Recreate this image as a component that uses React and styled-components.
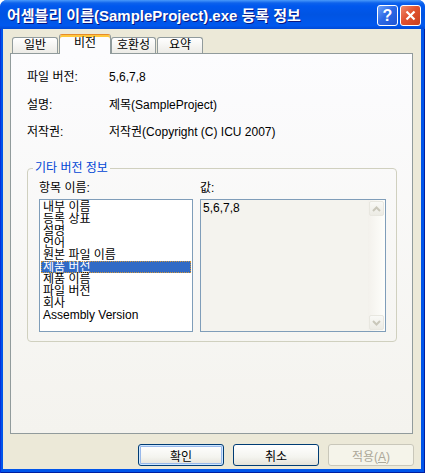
import React from "react";
import styled, { createGlobalStyle } from "styled-components";

const GlobalStyle = createGlobalStyle`
  html, body {
    margin: 0;
    padding: 0;
    background: #ffffff;
  }
  body {
    font-family: "Liberation Sans", "Noto Sans CJK KR", sans-serif;
    font-size: 12px;
    color: #000;
  }
`;

const Window = styled.div`
  width: 425px;
  height: 473px;
  display: flex;
  flex-direction: column;
  border-radius: 7px 7px 0 0;
  overflow: hidden;
  background: #0055ea;
`;

const TitleBar = styled.div`
  height: 29px;
  flex-shrink: 0;
  display: flex;
  align-items: center;
  justify-content: space-between;
  padding: 0 4px 0 7px;
  background: linear-gradient(
    to bottom,
    #4a9afa 0px,
    #0d62ec 3px,
    #0058ee 6px,
    #0054e3 50%,
    #0058ee 88%,
    #0049d6 100%
  );
`;

const Title = styled.span`
  color: #ffffff;
  font-size: 15px;
  font-weight: bold;
  text-shadow: 1px 1px 0 #0a1883;
  white-space: nowrap;
`;

const TitleButtons = styled.div`
  display: flex;
  gap: 2px;
  margin-top: 2px;
`;

const CaptionButton = styled.div`
  width: 21px;
  height: 21px;
  box-sizing: border-box;
  border: 1px solid #ffffff;
  border-radius: 3px;
  display: flex;
  align-items: center;
  justify-content: center;
  color: #ffffff;
  font-size: 16px;
  font-weight: bold;
  background: ${(p) =>
    p.$close
      ? "linear-gradient(135deg, #f08a6c 0%, #e0522f 45%, #c9401e 100%)"
      : "linear-gradient(135deg, #6ea2fa 0%, #2d6ae6 45%, #1f55d4 100%)"};
`;

const Frame = styled.div`
  flex: 1;
  display: flex;
  padding: 0 4px 4px 3px;
  background: #0055ea;
  box-shadow: inset 1px 0 #0831d9, inset -1px 0 #001ea0, inset 0 -1px #001ea0;
`;

const Body = styled.div`
  flex: 1;
  display: flex;
  flex-direction: column;
  background: #ece9d8;
  padding: 6px 8px 3px 7px;
`;

const TabRow = styled.div`
  height: 18px;
  display: flex;
  align-items: flex-end;
  padding-left: 2px;
  position: relative;
  z-index: 1;
`;

const Tab = styled.div`
  box-sizing: border-box;
  width: ${(p) => p.$width}px;
  height: ${(p) => (p.$active ? 20 : 16)}px;
  margin-bottom: ${(p) => (p.$active ? -1 : 0)}px;
  margin-right: ${(p) => (p.$active ? 0 : 1)}px;
  border: 1px solid #919b9c;
  border-bottom: none;
  border-top-color: ${(p) => (p.$active ? "#e68b2c" : "#919b9c")};
  border-radius: 3px 3px 0 0;
  box-shadow: ${(p) => (p.$active ? "inset 0 2px 0 #ffc83c" : "none")};
  background: ${(p) =>
    p.$active ? "#fcfcfe" : "linear-gradient(to bottom, #ffffff, #ecebe6)"};
  font-size: 12px;
  line-height: ${(p) => (p.$active ? 16 : 15)}px;
  text-align: center;
`;

const Panel = styled.div`
  flex: 1;
  display: flex;
  flex-direction: column;
  border: 1px solid #919b9c;
  background: linear-gradient(to bottom, #fcfcfe, #f4f3ee);
  padding-top: 16px;
`;

const InfoGrid = styled.div`
  display: grid;
  grid-template-columns: 82px 1fr;
  grid-auto-rows: 14px;
  row-gap: 13.5px;
  padding-left: 16px;
  line-height: 14px;
`;

const GroupBox = styled.fieldset`
  margin: 22px 15px 0 16px;
  padding: 6px 10px 9px 11px;
  border: 1px solid #d0d0bf;
  border-radius: 4px;
  min-width: 0;
`;

const GroupTitle = styled.legend`
  color: #0046d5;
  font-size: 12px;
  line-height: 14px;
  padding: 0 2px;
  margin-left: -6px;
`;

const VersionGrid = styled.div`
  display: grid;
  grid-template-columns: 154px 186px;
  grid-template-rows: 14px 133px;
  column-gap: 7px;
  row-gap: 4px;
  line-height: 14px;
`;

const ListBox = styled.div`
  box-sizing: border-box;
  border: 1px solid #7f9db9;
  background: #ffffff;
  padding: 1px;
`;

const ListItem = styled.div`
  box-sizing: border-box;
  height: 12px;
  line-height: 12px;
  padding-left: 2px;
  white-space: nowrap;
  background: ${(p) => (p.$selected ? "#316ac5" : "transparent")};
  color: ${(p) => (p.$selected ? "#ffffff" : "#000000")};
  outline: ${(p) => (p.$selected ? "1px dotted #ce953a" : "none")};
  outline-offset: -1px;
`;

const ValueBox = styled.div`
  box-sizing: border-box;
  border: 1px solid #7f9db9;
  background: #f4f3ee;
  display: flex;
`;

const ValueText = styled.div`
  flex: 1;
  padding: 1px 2px;
`;

const ScrollBar = styled.div`
  width: 17px;
  display: flex;
  flex-direction: column;
  justify-content: space-between;
  background: linear-gradient(to right, #f3f1ec, #fefefb);
`;

const ScrollButton = styled.div`
  width: 15px;
  height: 15px;
  margin: 1px;
  border: 1px solid #e8e7e0;
  border-radius: 2px;
  box-sizing: border-box;
  background: linear-gradient(to bottom, #f9f9f6, #ecebe4);
  display: flex;
  align-items: center;
  justify-content: center;
`;

const ButtonRow = styled.div`
  display: flex;
  justify-content: flex-end;
  gap: 9px;
  margin: 10px -1px 0 0;
`;

const DialogButton = styled.button`
  width: 86px;
  height: 22px;
  box-sizing: border-box;
  border: 1px solid ${(p) => (p.disabled ? "#c9c7ba" : "#003c74")};
  border-radius: 3px;
  padding: 0;
  font-family: "Liberation Sans", "Noto Sans CJK KR", sans-serif;
  font-size: 12px;
  color: ${(p) => (p.disabled ? "#aca899" : "#000000")};
  background: ${(p) =>
    p.disabled
      ? "#f5f4ea"
      : "linear-gradient(to bottom, #ffffff 0%, #f4f4ef 60%, #e3e1d8 100%)"};
  box-shadow: ${(p) =>
    p.$default ? "inset 0 0 0 1px #cee7ff, inset 0 0 0 2px #98b8ea" : "none"};
`;

const fields = [
  ["파일 버전:", "5,6,7,8"],
  ["설명:", "제목(SampleProject)"],
  ["저작권:", "저작권(Copyright (C) ICU 2007)"],
];

const items = [
  "내부 이름",
  "등록 상표",
  "설명",
  "언어",
  "원본 파일 이름",
  "제품 버전",
  "제품 이름",
  "파일 버전",
  "회사",
  "Assembly Version",
];

const Arrow = ({ up }) => (
  <svg width="9" height="6" viewBox="0 0 9 6">
    <path
      d={up ? "M1 5 L4.5 1.5 L8 5" : "M1 1 L4.5 4.5 L8 1"}
      fill="none"
      stroke="#c9c7ba"
      strokeWidth="2"
    />
  </svg>
);

export default function App() {
  return (
    <>
      <GlobalStyle />
      <Window>
        <TitleBar>
          <Title>어셈블리 이름(SampleProject).exe 등록 정보</Title>
          <TitleButtons>
            <CaptionButton>?</CaptionButton>
            <CaptionButton $close>
              <svg width="11" height="11" viewBox="0 0 11 11">
                <path
                  d="M1.5 1.5 L9.5 9.5 M9.5 1.5 L1.5 9.5"
                  stroke="#ffffff"
                  strokeWidth="2.2"
                />
              </svg>
            </CaptionButton>
          </TitleButtons>
        </TitleBar>
        <Frame>
          <Body>
            <TabRow>
              <Tab $width={46}>일반</Tab>
              <Tab $width={52} $active>
                비전
              </Tab>
              <Tab $width={45}>호환성</Tab>
              <Tab $width={46}>요약</Tab>
            </TabRow>
            <Panel>
              <InfoGrid>
                {fields.map(([label, value]) => (
                  <React.Fragment key={label}>
                    <span>{label}</span>
                    <span>{value}</span>
                  </React.Fragment>
                ))}
              </InfoGrid>
              <GroupBox>
                <GroupTitle>기타 버전 정보</GroupTitle>
                <VersionGrid>
                  <span>항목 이름:</span>
                  <span>값:</span>
                  <ListBox>
                    {items.map((item) => (
                      <ListItem key={item} $selected={item === "제품 버전"}>
                        {item}
                      </ListItem>
                    ))}
                  </ListBox>
                  <ValueBox>
                    <ValueText>5,6,7,8</ValueText>
                    <ScrollBar>
                      <ScrollButton>
                        <Arrow up />
                      </ScrollButton>
                      <ScrollButton>
                        <Arrow />
                      </ScrollButton>
                    </ScrollBar>
                  </ValueBox>
                </VersionGrid>
              </GroupBox>
            </Panel>
            <ButtonRow>
              <DialogButton $default>확인</DialogButton>
              <DialogButton>취소</DialogButton>
              <DialogButton disabled>
                적용(<u>A</u>)
              </DialogButton>
            </ButtonRow>
          </Body>
        </Frame>
      </Window>
    </>
  );
}
